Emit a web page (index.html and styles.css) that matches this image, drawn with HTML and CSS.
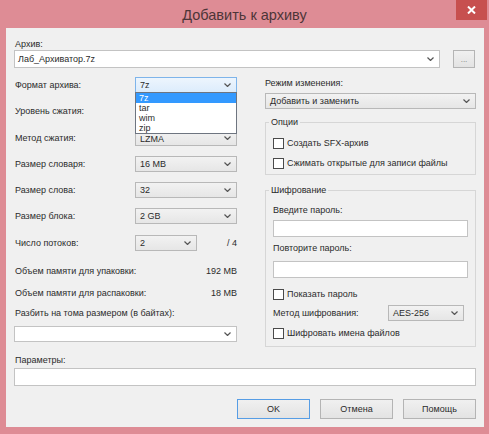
FILE: index.html
```html
<!DOCTYPE html>
<html lang="ru">
<head>
<meta charset="utf-8">
<title>Добавить к архиву</title>
<link rel="stylesheet" href="styles.css">
</head>
<body>
<div class="window">
  <div class="titlebar">
    <span class="title">Добавить к архиву</span>
    <div class="close"><svg width="9" height="8" viewBox="0 0 9 8"><path d="M1 0.5 L8 7.5 M8 0.5 L1 7.5" stroke="#fff" stroke-width="2" fill="none"/></svg></div>
  </div>
  <div class="content">
    <div class="toplabel">Архив:</div>
    <div class="archive-row">
      <div class="edit archive"><span>Лаб_Архиватор.7z</span><svg class="chev" width="7" height="4" viewBox="0 0 7 4"><path d="M0.5 0.5 L3.5 3.5 L6.5 0.5"/></svg></div>
      <div class="btn dots">...</div>
    </div>
    <div class="columns">
      <div class="left">
        <div class="row first">
          <span class="lbl">Формат архива:</span>
          <div class="sel focus w102"><span>7z</span><svg class="chev" width="7" height="4" viewBox="0 0 7 4"><path d="M0.5 0.5 L3.5 3.5 L6.5 0.5"/></svg></div>
          <div class="dropdown">
            <div class="item hl">7z</div>
            <div class="item">tar</div>
            <div class="item">wim</div>
            <div class="item">zip</div>
          </div>
        </div>
        <div class="row">
          <span class="lbl">Уровень сжатия:</span>
          <div class="sel w102"><span></span><svg class="chev" width="7" height="4" viewBox="0 0 7 4"><path d="M0.5 0.5 L3.5 3.5 L6.5 0.5"/></svg></div>
        </div>
        <div class="row">
          <span class="lbl">Метод сжатия:</span>
          <div class="sel w102"><span class="under">LZMA</span><svg class="chev" width="7" height="4" viewBox="0 0 7 4"><path d="M0.5 0.5 L3.5 3.5 L6.5 0.5"/></svg></div>
        </div>
        <div class="row">
          <span class="lbl">Размер словаря:</span>
          <div class="sel w102"><span>16 MB</span><svg class="chev" width="7" height="4" viewBox="0 0 7 4"><path d="M0.5 0.5 L3.5 3.5 L6.5 0.5"/></svg></div>
        </div>
        <div class="row">
          <span class="lbl">Размер слова:</span>
          <div class="sel w102"><span>32</span><svg class="chev" width="7" height="4" viewBox="0 0 7 4"><path d="M0.5 0.5 L3.5 3.5 L6.5 0.5"/></svg></div>
        </div>
        <div class="row">
          <span class="lbl">Размер блока:</span>
          <div class="sel w102"><span>2 GB</span><svg class="chev" width="7" height="4" viewBox="0 0 7 4"><path d="M0.5 0.5 L3.5 3.5 L6.5 0.5"/></svg></div>
        </div>
        <div class="row">
          <span class="lbl">Число потоков:</span>
          <div class="sel w62"><span>2</span><svg class="chev" width="7" height="4" viewBox="0 0 7 4"><path d="M0.5 0.5 L3.5 3.5 L6.5 0.5"/></svg></div>
          <span class="of">/ 4</span>
        </div>
        <div class="mem m1"><span>Объем памяти для упаковки:</span><span>192 MB</span></div>
        <div class="mem m2"><span>Объем памяти для распаковки:</span><span>18 MB</span></div>
        <div class="splitlabel">Разбить на тома размером (в байтах):</div>
        <div class="edit split"><span></span><svg class="chev" width="7" height="4" viewBox="0 0 7 4"><path d="M0.5 0.5 L3.5 3.5 L6.5 0.5"/></svg></div>
      </div>
      <div class="right">
        <div class="rlabel">Режим изменения:</div>
        <div class="sel mode"><span>Добавить и заменить</span><svg class="chev" width="7" height="4" viewBox="0 0 7 4"><path d="M0.5 0.5 L3.5 3.5 L6.5 0.5"/></svg></div>
        <fieldset class="group options">
          <legend>Опции</legend>
          <div class="cb c1"><span class="box"></span><span>Создать SFX-архив</span></div>
          <div class="cb c2"><span class="box"></span><span>Сжимать открытые для записи файлы</span></div>
        </fieldset>
        <fieldset class="group crypt">
          <legend>Шифрование</legend>
          <div class="glabel g1">Введите пароль:</div>
          <div class="input i1"></div>
          <div class="glabel g2">Повторите пароль:</div>
          <div class="input i2"></div>
          <div class="cb c3"><span class="box"></span><span>Показать пароль</span></div>
          <div class="crow">
            <span class="clbl">Метод шифрования:</span>
            <div class="sel w76"><span>AES-256</span><svg class="chev" width="7" height="4" viewBox="0 0 7 4"><path d="M0.5 0.5 L3.5 3.5 L6.5 0.5"/></svg></div>
          </div>
          <div class="cb c4"><span class="box"></span><span>Шифровать имена файлов</span></div>
        </fieldset>
      </div>
    </div>
    <div class="plabel">Параметры:</div>
    <div class="input params"></div>
    <div class="buttons">
      <div class="btn main default">OK</div>
      <div class="btn main">Отмена</div>
      <div class="btn main">Помощь</div>
    </div>
  </div>
</div>
</body>
</html>
```

FILE: styles.css
```css
* { box-sizing: border-box; }
body {
  margin: 0;
  font-family: "Liberation Sans", Arial, sans-serif;
  font-size: 9px;
  color: #2b2b2b;
}
.window {
  width: 489px;
  height: 434px;
  background: #de8c95;
  position: relative;
  overflow: hidden;
}
.titlebar {
  height: 28px;
  display: flex;
  align-items: center;
  justify-content: center;
  padding-top: 2px;
}
.title {
  font-size: 14.5px;
  color: #4d3538;
}
.close {
  position: absolute;
  top: 0;
  right: 2px;
  width: 31px;
  height: 20px;
  background: #c7504f;
  display: flex;
  align-items: center;
  justify-content: center;
}
.content {
  margin: 0 5px 0 6px;
  height: 399px;
  background: #f0f0f0;
  padding: 10px 8px 0 8px;
}
.chev path { fill: none; stroke: #555; stroke-width: 1.2; }
.toplabel { height: 12px; line-height: 12px; padding-left: 1px; }
.archive-row {
  display: flex;
  justify-content: space-between;
  height: 18px;
}
.edit {
  background: #fff;
  border: 1px solid #c3c3c3;
  display: flex;
  align-items: center;
  justify-content: space-between;
  padding: 0 5px 0 3px;
}
.archive { width: 426px; }
.btn {
  background: linear-gradient(#f0f0f0, #e3e3e3);
  border: 1px solid #b4b4b4;
  display: flex;
  align-items: center;
  justify-content: center;
}
.dots { width: 22px; margin-right: 1px; color: #777; font-size: 8px; }
.columns {
  display: flex;
  gap: 28px;
  margin-top: 9px;
}
.left { width: 223px; display: flex; flex-direction: column; }
.right { width: 211px; display: flex; flex-direction: column; }
.row {
  display: flex;
  align-items: center;
  height: 16px;
  position: relative;
}
.row + .row { margin-top: 10.3px; }
.lbl { width: 121px; padding-left: 1px; }
.sel {
  height: 16px;
  border: 1px solid #b8b8b8;
  background: linear-gradient(#f2f2f2, #e6e6e6);
  display: flex;
  align-items: center;
  justify-content: space-between;
  padding: 0 5px 0 4px;
}
.sel.focus {
  border-color: #7eb4ea;
  background: linear-gradient(#edf5fd, #dcecfc);
}
.under { margin-top: 3px; }
.w102 { width: 102px; }
.w62 { width: 62px; }
.w76 { width: 76px; }
.of { margin-left: auto; }
.dropdown {
  position: absolute;
  left: 121px;
  top: 15px;
  width: 102px;
  border: 1px solid #6e7580;
  background: #fff;
  z-index: 2;
}
.item { height: 10px; line-height: 10px; padding-left: 3px; }
.item.hl { background: #3399ff; color: #fff; }
.mem {
  display: flex;
  justify-content: space-between;
  height: 12px;
  line-height: 12px;
  padding-left: 1px;
}
.m1 { margin-top: 14.2px; }
.m2 { margin-top: 10px; }
.splitlabel { margin-top: 8px; height: 12px; line-height: 12px; padding-left: 1px; }
.split { margin-top: 7px; height: 16px; width: 223px; }
.rlabel { height: 12px; line-height: 12px; }
.mode { margin-top: 4px; width: 211px; }
.group {
  margin: 0;
  border: 1px solid #d6d6d6;
  padding: 0 7px;
  min-width: 0;
}
.group legend {
  padding: 0 2px;
  margin-left: -4px;
  height: 12px;
  line-height: 12px;
}
.options { margin-top: 7px; padding-bottom: 5px; }
.crypt { margin-top: 9px; padding-bottom: 7px; }
.cb {
  display: flex;
  align-items: center;
  height: 12px;
  gap: 3px;
}
.box {
  width: 11px;
  height: 11px;
  border: 1px solid #4a4a4a;
  background: #fff;
}
.c1 { margin-top: 9px; }
.c2 { margin-top: 8px; }
.glabel { height: 12px; line-height: 12px; }
.g1 { margin-top: 8px; }
.g2 { margin-top: 5px; }
.input {
  background: #fff;
  border: 1px solid #c3c3c3;
  height: 17px;
}
.i1 { margin-top: 4px; }
.i2 { margin-top: 7px; }
.c3 { margin-top: 10px; }
.crow {
  display: flex;
  align-items: center;
  height: 16px;
  margin-top: 5px;
}
.clbl { width: 115px; }
.c4 { margin-top: 6px; }
.plabel {
  margin-top: 7px;
  height: 12px;
  line-height: 12px;
  padding-left: 1px;
}
.params { margin-top: 2px; height: 18px; width: 462px; }
.buttons {
  display: flex;
  justify-content: flex-end;
  gap: 10px;
  margin-top: 13px;
}
.main { width: 73px; height: 20px; }
.default { border-color: #569de5; }
```
